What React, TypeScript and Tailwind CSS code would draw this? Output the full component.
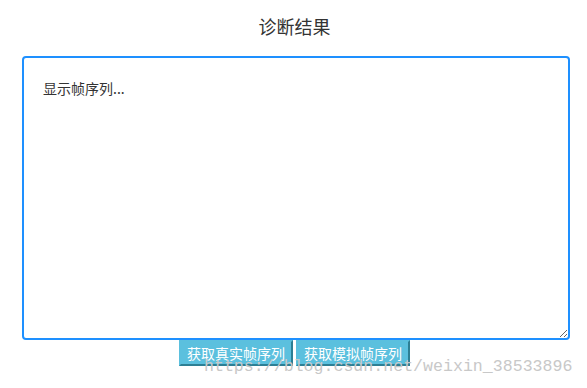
export default function App() {
  return (
    <div
      className="relative w-[587px] h-[388px] bg-white overflow-hidden"
      style={{ fontFamily: '"Noto Sans CJK SC", "Liberation Sans", sans-serif' }}
    >
      {/* Title */}
      <h1 className="pt-[14px] h-[56px] text-center text-[18px] leading-[24px] text-[#333] pl-[2px]">
        诊断结果
      </h1>

      {/* Frame output */}
      <textarea
        className="block ml-[22px] w-[548px] h-[284px] border-2 border-[#1e90ff] rounded-[4px] px-[19px] pt-[20px] text-[14px] leading-[20px] text-[#333] placeholder:text-[#333] outline-none resize"
        placeholder="显示帧序列..."
      />

      {/* Actions */}
      <div className="flex justify-center gap-[3px] pl-[2px]">
        <button className="h-[26px] px-[6px] bg-[#5bc0de] text-white text-[14px] leading-[20px] border-2 border-t-[#5bc0de] border-l-[#5bc0de] border-b-[#2d7f94] border-r-[#2d7f94]">
          获取真实帧序列
        </button>
        <button className="h-[26px] px-[6px] bg-[#5bc0de] text-white text-[14px] leading-[20px] border-2 border-t-[#5bc0de] border-l-[#5bc0de] border-b-[#2d7f94] border-r-[#2d7f94]">
          获取模拟帧序列
        </button>
      </div>

      {/* Watermark */}
      <div
        className="absolute left-[204px] top-[356px] text-[16.6px] leading-[22px] text-[#c8c8c8] pointer-events-none whitespace-nowrap"
        style={{ fontFamily: '"Liberation Mono", monospace' }}
      >
        https://blog.csdn.net/weixin_38533896
      </div>
    </div>
  );
}
